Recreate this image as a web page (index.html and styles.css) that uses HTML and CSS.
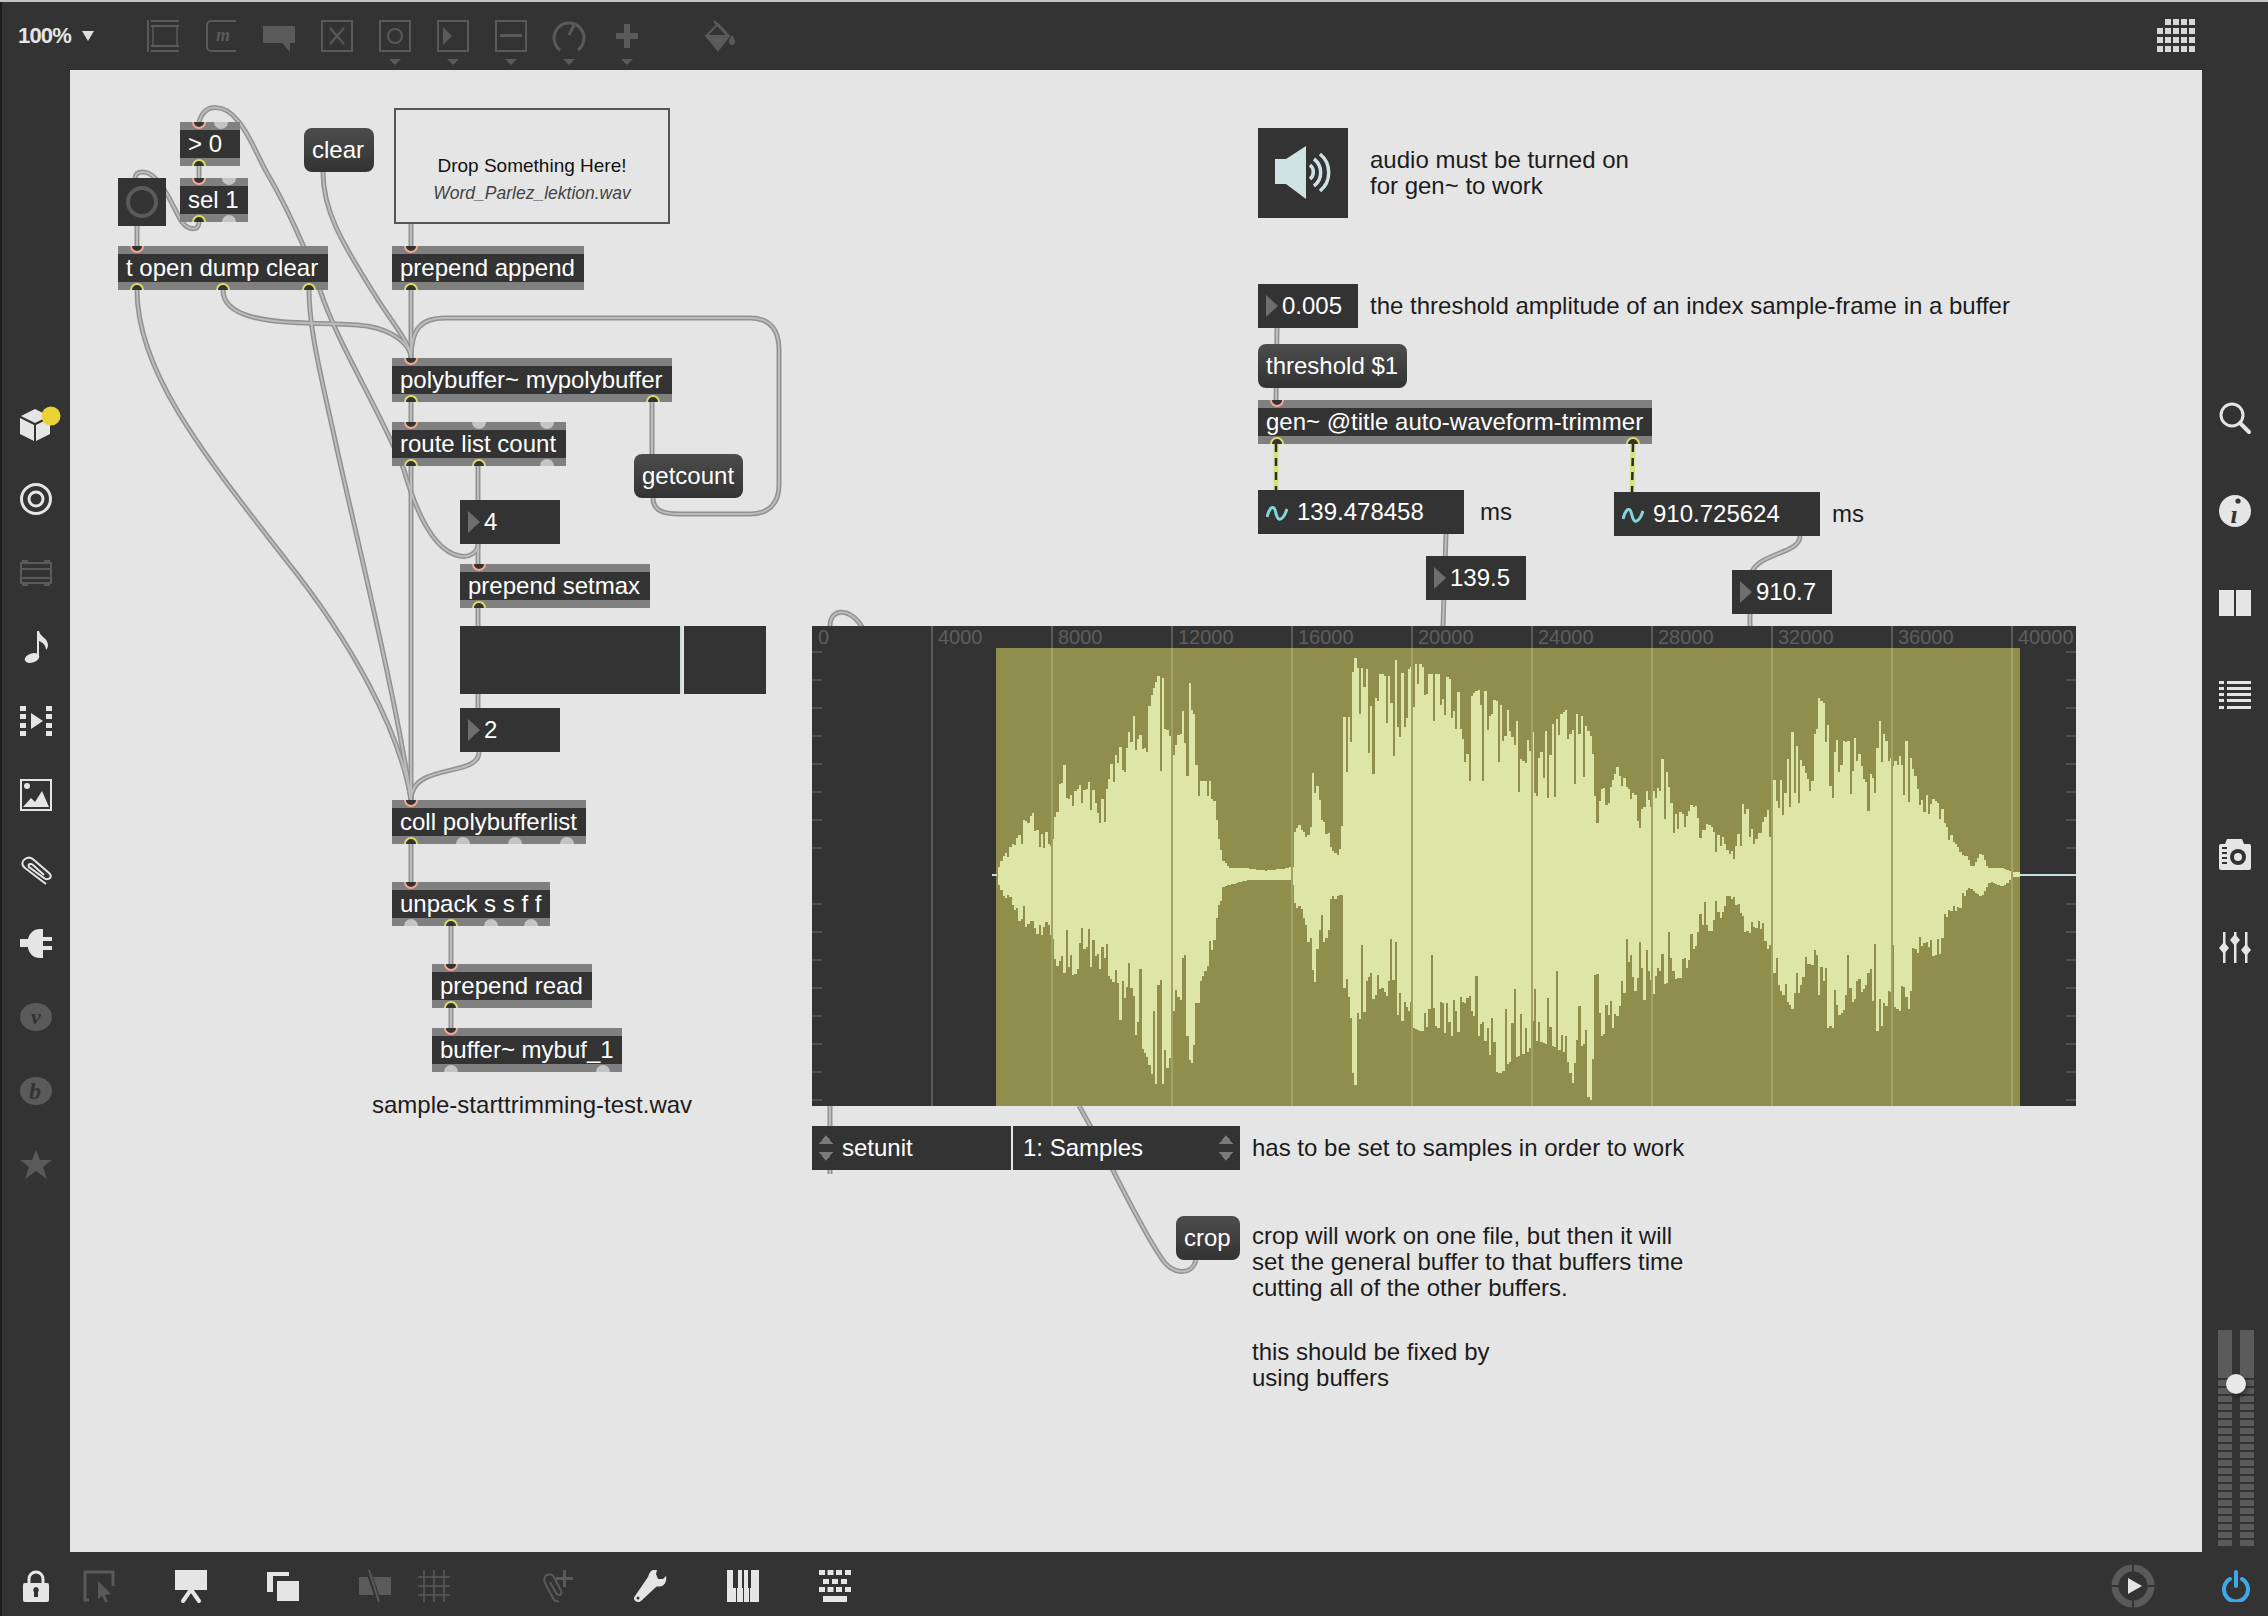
FILE: index.html
```html
<!DOCTYPE html>
<html lang="en">
<head>
  <meta charset="UTF-8">
  <title>Max patcher - auto waveform trimmer</title>
  <link rel="stylesheet" href="styles.css">
</head>
<body>

<div class="window">

  <!-- top toolbar -->
  <header class="topbar">
    <div class="zoom-level">100%<span class="zoom-arrow"></span></div>
    <div class="tools">
      <div class="tool"><svg class="ico dim" viewBox="0 0 32 32"><path class="s2" d="M1 0v32"/><path class="s2" d="M4 1h28M4 6h28M4 26h28M4 31h28"/><path class="s1" d="M6 6v20M30 6v20"/></svg></div>
      <div class="tool"><svg class="ico dim" viewBox="0 0 32 32"><path class="s2" d="M31 1H6a4 4 0 0 0-4 4v22a4 4 0 0 0 4 4h25"/><text class="glyph" x="11" y="21" font-size="18" fill="#5a5a5a">m</text></svg></div>
      <div class="tool"><svg class="ico dim" viewBox="0 0 32 32"><path class="f" d="M0 6h32v17h-5v9l-8-9H0z"/></svg></div>
      <div class="tool"><svg class="ico dim" viewBox="0 0 32 32"><path class="s2" d="M1 1h30v30H1z"/><path class="s2" d="M9 8l14 16M23 8L9 24"/></svg></div>
      <div class="tool menu-tool"><svg class="ico dim" viewBox="0 0 32 32"><path class="s2" d="M1 1h30v30H1z"/><circle class="s2" cx="16" cy="16" r="7"/></svg><span class="tool-arrow"></span></div>
      <div class="tool menu-tool"><svg class="ico dim" viewBox="0 0 32 32"><path class="s2" d="M1 1h30v30H1z"/><path class="f" d="M6 7l9 9-9 9z"/></svg><span class="tool-arrow"></span></div>
      <div class="tool menu-tool"><svg class="ico dim" viewBox="0 0 32 32"><path class="s2" d="M1 1h30v30H1z"/><path class="f" d="M5 14h22v3H5z"/></svg><span class="tool-arrow"></span></div>
      <div class="tool menu-tool"><svg class="ico dim" viewBox="0 0 32 32"><path class="s3" d="M7 30A15 15 0 1 1 25 30"/><path class="s3" d="M16 15l5-10"/></svg><span class="tool-arrow"></span></div>
      <div class="tool menu-tool"><svg class="ico dim" viewBox="0 0 32 32"><path class="f" d="M13 4h6v9h8v6h-8v9h-6v-9H5v-6h8z"/></svg><span class="tool-arrow"></span></div>
      <div class="tool tool-paint"><svg class="ico dim" viewBox="0 0 32 32"><path class="s2" d="M11 1l13 14M4 15L15 4l11 12-11 14z"/><path class="f" d="M1 15h25L14 30z"/><path class="f" d="M29 15c2 3 3 5 3 7a3 3 0 0 1-6 0c0-2 1-4 3-7z"/></svg></div>
    </div>
    <svg class="grid-button" viewBox="0 0 42 38">
      <path d="M10 1h6v6h-6zM18 1h6v6h-6zM26 1h6v6h-6zM34 1h6v6h-6zM2 10h6v6H2zM10 10h6v6h-6zM18 10h6v6h-6zM26 10h6v6h-6zM34 10h6v6h-6zM2 19h6v6H2zM10 19h6v6h-6zM18 19h6v6h-6zM26 19h6v6h-6zM34 19h6v6h-6zM2 28h6v6H2zM10 28h6v6h-6zM18 28h6v6h-6zM26 28h6v6h-6zM34 28h6v6h-6z"/>
    </svg>
  </header>

  <!-- left sidebar -->
  <nav class="leftbar">
    <svg class="ico lit" viewBox="0 0 32 32"><path class="f" d="M15 0l14 7-14 7L1 7z"/><path class="f" d="M0 9l14 7v16L0 25z"/><path class="f" d="M16 16l14-7v16l-14 7z"/><circle cx="31" cy="7" r="9.5" fill="#ead235"/></svg>
    <svg class="ico lit" viewBox="0 0 32 32"><circle class="s3" cx="16" cy="16" r="14.5"/><circle class="s3" cx="16" cy="16" r="7"/></svg>
    <svg class="ico dim" viewBox="0 0 32 32"><path class="s2" d="M1 6h30v20H1z"/><path class="f" d="M1 11h30v2H1zM1 20h30v2H1zM2 26h6v3H2zM24 26h6v3h-6zM2 3h6v3H2zM24 3h6v3h-6z"/></svg>
    <svg class="ico lit" viewBox="0 0 32 32"><ellipse class="f" cx="12" cy="27" rx="7.5" ry="4.5" transform="rotate(-18 12 27)"/><path class="f" d="M17 0h2c1 6 9 7 9 14 0 2-1 4-2 5 0-5-4-8-7-9v17h-2z"/></svg>
    <svg class="ico lit" viewBox="0 0 32 32"><path class="f" d="M0 1h6v5H0zM0 9h6v5H0zM0 18h6v5H0zM0 26h6v5H0zM26 1h6v5h-6zM26 9h6v5h-6zM26 18h6v5h-6zM26 26h6v5h-6zM11 8l12 8-12 8z"/></svg>
    <svg class="ico lit" viewBox="0 0 32 32"><path class="s2" d="M1 1h30v30H1z"/><circle class="f" cx="7" cy="7" r="3"/><path class="f" d="M3 28l8-9 4 4 7-11 7 16z"/></svg>
    <svg class="ico lit" viewBox="0 0 32 32"><path class="s2" d="M26 31L5 15c-4-3-3-7 0-9s6-2 9 1l15 13c2 2 2 4 1 5s-4 2-6 0L9 14c-1-2 0-3 1-3s2 0 3 1l11 10"/></svg>
    <svg class="ico lit" viewBox="0 0 32 32"><path class="f" d="M0 12h8c1-5 5-10 12-10h3v8h9v4h-9v5h9v4h-9v8h-3c-7 0-11-5-12-10v-1H0z"/></svg>
    <svg class="ico dim" viewBox="0 0 32 32"><ellipse class="f" cx="16" cy="16" rx="16" ry="14"/><text class="glyph" x="16" y="23" font-size="22" text-anchor="middle" fill="#333">v</text></svg>
    <svg class="ico dim" viewBox="0 0 32 32"><ellipse class="f" cx="16" cy="16" rx="16" ry="14"/><text class="glyph" x="15" y="24" font-size="24" text-anchor="middle" fill="#333">b</text></svg>
    <svg class="ico dim" viewBox="0 0 32 32"><path class="f" d="M16 1l4 10h12l-9 7 4 12-11-8-11 8 4-12-9-7h12z"/></svg>
  </nav>

  <!-- patcher canvas -->
  <main class="canvas">
    <svg class="cords" viewBox="70 70 2132 1482">
      <g class="cord-edge">
        <g id="cordPaths">
          <path d="M478 544C478 552 470 558 460 556C432 551 414 505 404 470C380 410 338 345 320 290L303 245C290 215 280 195 267 173C257 155 250 135 238 121C225 104 205 102 199 122"/>
          <path d="M199 222C199 232 188 230 182 222C174 210 168 190 155 178C147 170 136 170 135 178"/>
          <path d="M137 226V246"/>
          <path d="M199 166V178"/>
          <path d="M323 172C323 210 340 240 378 300C395 326 411 345 411 358"/>
          <path d="M411 224V246"/>
          <path d="M411 290V358"/>
          <path d="M223 290C223 318 270 322 306 323C350 325 375 322 398 338C406 344 411 350 411 358"/>
          <path d="M309 290C309 330 322 380 335 440C350 510 397 700 411 800"/>
          <path d="M137 290C137 370 200 450 286 560C350 640 400 730 411 800"/>
          <path d="M411 402V422"/>
          <path d="M411 466V800"/>
          <path d="M652 402V454"/>
          <path d="M653 498C653 510 662 514 680 514H750C770 514 779 502 779 485V350C779 330 770 318 750 318H445C420 318 411 330 411 358"/>
          <path d="M478 466V500"/>
          <path d="M478 544V564"/>
          <path d="M478 608V708"/>
          <path d="M479 752C479 778 411 762 411 800"/>
          <path d="M411 844V882"/>
          <path d="M451 926V964"/>
          <path d="M451 1008V1028"/>
          <path d="M1277 328L1276 400"/>
          <path d="M1446 534L1443 626"/>
          <path d="M1800 536C1800 556 1750 552 1750 580V626"/>
          <path d="M830 626C830 608 850 606 864 630"/>
          <path d="M830 626V1174"/>
          <path d="M1196 1260C1192 1276 1172 1276 1160 1256C1130 1210 1100 1140 1079 1106"/>
        </g>
      </g>
      <g class="cord-core"><use href="#cordPaths"/></g>
      <g class="cord-signal">
        <path class="sig-a" d="M1276 444V490M1633 444L1632 492"/>
        <path class="sig-b" d="M1276 444V490M1633 444L1632 492"/>
      </g>
    </svg>

    <div class="obj n-gt">
      <div class="ports"><i class="in"></i><i class="off"></i></div>
      <span class="label">&gt; 0</span>
      <div class="ports"><i class="out"></i></div>
    </div>
    <div class="obj n-sel">
      <div class="ports"><i class="in"></i><i class="off"></i></div>
      <span class="label">sel 1</span>
      <div class="ports"><i class="out"></i><i class="off"></i></div>
    </div>
    <div class="bang n-btn"><span class="bang-ring"></span></div>
    <div class="obj n-trig">
      <div class="ports"><i class="in"></i></div>
      <span class="label">t open dump clear</span>
      <div class="ports"><i class="out"></i><i class="out"></i><i class="out"></i></div>
    </div>
    <div class="msg n-clear">clear</div>
    <div class="dropbox n-drop">
      <span class="drop-title">Drop Something Here!</span>
      <span class="drop-file">Word_Parlez_lektion.wav</span>
    </div>
    <div class="obj n-append">
      <div class="ports"><i class="in"></i></div>
      <span class="label">prepend append</span>
      <div class="ports"><i class="out"></i></div>
    </div>
    <div class="obj n-poly">
      <div class="ports"><i class="in"></i></div>
      <span class="label">polybuffer~ mypolybuffer</span>
      <div class="ports"><i class="out"></i><i class="out"></i></div>
    </div>
    <div class="obj n-route">
      <div class="ports"><i class="in"></i><i class="off"></i><i class="off"></i></div>
      <span class="label">route list count</span>
      <div class="ports"><i class="out"></i><i class="out"></i><i class="off"></i></div>
    </div>
    <div class="msg n-getcount">getcount</div>
    <div class="num n-num4"><span class="num-tri"></span>4</div>
    <div class="obj n-setmax">
      <div class="ports"><i class="in"></i></div>
      <span class="label">prepend setmax</span>
      <div class="ports"><i class="out"></i></div>
    </div>
    <div class="slider n-slider"><span class="slider-handle"></span></div>
    <div class="num n-num2"><span class="num-tri"></span>2</div>
    <div class="obj n-coll">
      <div class="ports"><i class="in"></i></div>
      <span class="label">coll polybufferlist</span>
      <div class="ports"><i class="out"></i><i class="off"></i><i class="off"></i><i class="off"></i></div>
    </div>
    <div class="obj n-unpack">
      <div class="ports"><i class="in"></i></div>
      <span class="label">unpack s s f f</span>
      <div class="ports"><i class="off"></i><i class="out"></i><i class="off"></i><i class="off"></i></div>
    </div>
    <div class="obj n-read">
      <div class="ports"><i class="in"></i></div>
      <span class="label">prepend read</span>
      <div class="ports"><i class="out"></i></div>
    </div>
    <div class="obj n-buffer">
      <div class="ports"><i class="in"></i></div>
      <span class="label">buffer~ mybuf_1</span>
      <div class="ports"><i class="off"></i><i class="off"></i></div>
    </div>
    <div class="comment n-sample">sample-starttrimming-test.wav</div>

    <div class="speaker n-speaker">
      <svg viewBox="0 0 90 90">
        <path class="spk-fill" d="M17 31h11l20-13v53L28 56H17z"/>
        <path class="spk-line" d="M52 37a9 9 0 0 1 0 14M56 31a17 17 0 0 1 0 27M62 26a24 24 0 0 1 0 37"/>
      </svg>
    </div>
    <div class="comment n-audio">audio must be turned on<br>for gen~ to work</div>

    <div class="num n-thresh-num"><span class="num-tri"></span>0.005</div>
    <div class="comment n-thresh-text">the threshold amplitude of an index sample-frame in a buffer</div>
    <div class="msg n-thresh">threshold $1</div>
    <div class="obj n-gen">
      <div class="ports"><i class="in"></i></div>
      <span class="label">gen~ @title auto-waveform-trimmer</span>
      <div class="ports"><i class="out"></i><i class="out"></i></div>
    </div>
    <div class="num num-sig n-sig1">
      <svg class="sig-wave" viewBox="0 0 22 16"><path d="M1 12C3 4 6 1 8 3S10 13 13 14 19 10 21 4"/></svg>139.478458
    </div>
    <div class="comment n-ms1">ms</div>
    <div class="num num-sig n-sig2">
      <svg class="sig-wave" viewBox="0 0 22 16"><path d="M1 12C3 4 6 1 8 3S10 13 13 14 19 10 21 4"/></svg>910.725624
    </div>
    <div class="comment n-ms2">ms</div>
    <div class="num n-start"><span class="num-tri"></span>139.5</div>
    <div class="num n-end"><span class="num-tri"></span>910.7</div>

    <div class="waveform n-wave">
      <svg class="wave-plot" viewBox="0 0 1264 480">
        <rect class="wave-sel" x="184" y="22" width="1024" height="458"/>
        <path class="wave-ticks" d="M0 26h10M0 54h10M0 82h10M0 110h10M0 138h10M0 166h10M0 194h10M0 222h10M0 278h10M0 306h10M0 334h10M0 362h10M0 390h10M0 418h10M0 446h10M0 474h10M1254 26h10M1254 54h10M1254 82h10M1254 110h10M1254 138h10M1254 166h10M1254 194h10M1254 222h10M1254 278h10M1254 306h10M1254 334h10M1254 362h10M1254 390h10M1254 418h10M1254 446h10M1254 474h10"/>
        <path class="wave-center" d="M180 249h5M1208 249h56"/>
        <path class="wave-data" id="waveData"/>
        <path class="wave-grid" d="M120 0v480M240 0v22M360 0v22M480 0v22M600 0v22M720 0v22M840 0v22M960 0v22M1080 0v22M1200 0v22"/>
        <path class="wave-grid-sel" d="M240 22v458M360 22v458M480 22v458M600 22v458M720 22v458M840 22v458M960 22v458M1080 22v458M1200 22v458"/>
      </svg>
      <div class="ruler">
        <span>0</span><span>4000</span><span>8000</span><span>12000</span><span>16000</span><span>20000</span><span>24000</span><span>28000</span><span>32000</span><span>36000</span><span class="ruler-last">40000</span>
      </div>
    </div>

    <div class="umenu n-menu1"><span class="updown"></span>setunit</div>
    <div class="umenu umenu-right n-menu2">1: Samples<span class="updown"></span></div>
    <div class="comment n-has">has to be set to samples in order to work</div>
    <div class="msg n-crop">crop</div>
    <div class="comment n-croptext">crop will work on one file, but then it will<br>set the general buffer to that buffers time<br>cutting all of the other buffers.</div>
    <div class="comment n-fix">this should be fixed by<br>using buffers</div>
  </main>

  <!-- right sidebar -->
  <aside class="rightbar">
    <svg class="ico lit" viewBox="0 0 32 32"><circle class="s3" cx="13" cy="13" r="11"/><path class="s-round" d="M21 21l9 9"/></svg>
    <svg class="ico lit" viewBox="0 0 32 32"><circle class="f" cx="16" cy="16" r="16"/><circle cx="19" cy="6" r="2.6" fill="#333"/><text class="glyph" x="15" y="28" font-size="26" text-anchor="middle" fill="#333">ı</text></svg>
    <svg class="ico lit" viewBox="0 0 32 32"><path class="f" d="M0 3h15v26H0zM17 3h15v26H17z"/></svg>
    <svg class="ico lit" viewBox="0 0 32 32"><path class="f" d="M0 1h5v3H0zM8 1h24v3H8zM0 7h5v3H0zM8 7h24v3H8zM0 13h5v3H0zM8 13h24v3H8zM0 19h5v3H0zM8 19h24v3H8zM0 26h5v3H0zM8 26h24v3H8z"/></svg>
    <svg class="ico lit ico-gap" viewBox="0 0 32 32"><path class="f" d="M8 0h15l2 5h5a2 2 0 0 1 2 2v22a2 2 0 0 1-2 2H2a2 2 0 0 1-2-2V7a2 2 0 0 1 2-2h4z"/><circle cx="19" cy="18" r="8" fill="#333"/><circle class="f" cx="19" cy="18" r="4"/><path d="M3 8h5v2H3zM3 13h5v2H3zM3 18h5v2H3zM3 23h5v2H3z" fill="#333"/></svg>
    <svg class="ico lit" viewBox="0 0 32 32"><path class="f" d="M4 0h2.500v12h-2.500zM4 20h2.500v11h-2.500zM15 0h2.500v4h-2.500zM15 12h2.500v19h-2.500zM26 0h2.500v14h-2.500zM26 22h2.500v9h-2.500z"/><path class="f" d="M5 10l5 6-5 6-5-6zM16 2l5 6-5 6-5-6zM27 12l5 6-5 6-5-6z"/></svg>
    <div class="meter">
      <span class="meter-bar"></span>
      <span class="meter-bar"></span>
      <span class="meter-knob"></span>
    </div>
  </aside>

  <!-- bottom toolbar -->
  <footer class="bottombar">
    <svg class="ico lit b-lock" viewBox="0 0 26 32"><path class="s3" d="M6 15V9a7 7 0 0 1 14 0v6"/><rect class="f" x="0" y="13" width="26" height="19" rx="2"/><path d="M13 17a3 3 0 0 1 2 5v5h-4v-5a3 3 0 0 1 2-5z" fill="#333"/></svg>
    <svg class="ico dim b-edit" viewBox="0 0 32 32"><path class="s3" d="M6 30H2V2h28v14"/><path class="f" d="M15 11l13 13-6 1 3 7-3 0-3-6-4 3z"/></svg>
    <svg class="ico lit b-board" viewBox="0 0 32 32"><path class="f" d="M0 0h32v20H0z"/><path class="s-round" d="M15 21L8 31M17 21l7 10"/></svg>
    <svg class="ico lit b-windows" viewBox="0 0 32 32"><path class="f" d="M0 2h22v4H6v16H0z"/><path class="f" d="M10 11h22v20H10z"/></svg>
    <svg class="ico dim b-snap" viewBox="0 0 32 32"><path class="f" d="M0 7h32v18H0z"/><path class="cut" d="M9 0l11 32"/><path class="s2" d="M10 0l10 32"/></svg>
    <svg class="ico dim b-grid" viewBox="0 0 32 32"><path class="s1" d="M6 0v32M16 0v32M26 0v32M0 7h32M0 16h32M0 25h32"/></svg>
    <svg class="ico dim b-clip" viewBox="0 0 32 32"><path class="s2" d="M17 31c-3 1-5-1-6-3L3 13c-2-4 0-7 2-8s5-1 7 2l7 14c1 2 0 4-1 4s-3 0-4-2L8 12"/><path class="f" d="M21 0h3v7h7v3h-7v7h-3v-7h-7V7h7z"/></svg>
    <svg class="ico lit b-wrench" viewBox="0 0 32 32"><path class="f" d="M23 0l-1 4 2 5 5 0 3-3c1 4-1 9-4 10-3 1-5 0-6 1L7 31c-2 2-6 1-7-2 0-1 0-2 1-3l13-19c1-3 2-6 5-7z"/><circle cx="4" cy="28" r="1.500" fill="#333"/></svg>
    <svg class="ico lit b-piano" viewBox="0 0 32 32"><path class="f" d="M0 0h6v18h3v14H0zM11 0h4v18h1v14h-6V18h1zM17 0h4v18h1v14h-5zM24 0h8v32h-9V18h1z"/></svg>
    <svg class="ico lit b-keys" viewBox="0 0 32 32"><path class="f" d="M0 0h6v5H0zM8.500 0h6v5h-6zM17 0h6v5h-6zM26 0h6v5h-6zM4 9h6v5H4zM13 9h6v5h-6zM22 9h6v5h-6zM0 17h6v5H0zM8.500 17h6v5h-6zM17 17h6v5h-6zM26 17h6v5h-6zM4 26h24v6H4z"/></svg>
    <svg class="b-dial" viewBox="0 0 44 44"><circle class="dial-ring" cx="22" cy="22" r="18"/><path class="dial-cut" d="M22 0v44M0 22h44"/><path class="dial-play" d="M17 14l14 8-14 8z"/></svg>
    <svg class="b-power" viewBox="0 0 28 32"><path class="pow" d="M8 9a12 12 0 1 0 12 0"/><path class="pow" d="M14 2v14"/></svg>
  </footer>
</div>

<script src="wave.js"></script>
</body>
</html>
```

FILE: styles.css
```css
* {
  box-sizing: border-box;
}

html,
body {
  margin: 0;
  height: 100%;
}

body {
  background: #333;
  font-family: 'Liberation Sans', Arial, sans-serif;
  overflow: hidden;
}

.window {
  width: 2268px;
  height: 1616px;
  display: grid;
  grid-template-columns: 70px 2132px 66px;
  grid-template-rows: 68px 1482px 64px;
  background: #333;
  border-top: 2px solid #c4c4c4;
  box-shadow: inset 2px 0 0 #1d1d1d;
}

/* shared icon styles */
.ico {
  width: 32px;
  height: 32px;
  overflow: visible;
  display: block;
  flex: none;
}

.lit { color: #e5e5e5; }
.dim { color: #5a5a5a; }

.f { fill: currentColor; }
.s1, .s2, .s3, .s-round { fill: none; stroke: currentColor; }
.s1 { stroke-width: 1.5; }
.s2 { stroke-width: 2; }
.s3 { stroke-width: 3; }
.s-round { stroke-width: 4; stroke-linecap: round; }
.cut { fill: none; stroke: #333; stroke-width: 5; }

.glyph {
  font-family: 'Liberation Serif', serif;
  font-style: italic;
  font-weight: 700;
}

/* top toolbar */
.topbar {
  grid-column: 1 / 4;
  display: flex;
  align-items: flex-start;
  position: relative;
}

.zoom-level {
  margin: 22px 0 0 18px;
  width: 129px;
  color: #e5e5e5;
  font-size: 22px;
  font-weight: 700;
  line-height: 24px;
  letter-spacing: -0.8px;
  display: flex;
  align-items: center;
}

.zoom-arrow {
  margin-left: 11px;
  border-left: 6px solid transparent;
  border-right: 6px solid transparent;
  border-top: 10px solid #ddd;
}

.tools {
  display: flex;
  gap: 26px;
  padding-top: 18px;
}

.tool {
  width: 32px;
  display: flex;
  flex-direction: column;
  align-items: center;
}

.tool-arrow {
  margin-top: 7px;
  border-left: 6px solid transparent;
  border-right: 6px solid transparent;
  border-top: 6px solid #5a5a5a;
}

.tool-paint {
  margin-left: 34px;
}

.grid-button {
  width: 42px;
  height: 38px;
  margin: 16px 71px 0 auto;
  fill: #d8d8d8;
}

/* left sidebar */
.leftbar {
  display: flex;
  flex-direction: column;
  align-items: center;
  gap: 42px;
  padding: 339px 0 0 2px;
}

/* right sidebar */
.rightbar {
  display: flex;
  flex-direction: column;
  align-items: center;
  gap: 60.500px;
  padding-top: 332px;
  position: relative;
}

.ico-gap {
  margin-top: 67px;
}

.meter {
  position: absolute;
  left: 16px;
  bottom: 6px;
  display: flex;
  gap: 8px;
}

.meter-bar {
  width: 14px;
  height: 216px;
  background:
    linear-gradient(#5a5a5a, #5a5a5a) top / 100% 48px no-repeat,
    repeating-linear-gradient(#333 0, #333 2px, #5a5a5a 2px, #5a5a5a 8px) 0 48px;
}

.meter-knob {
  position: absolute;
  left: 8px;
  top: 44px;
  width: 20px;
  height: 20px;
  border-radius: 50%;
  background: #e8e8e8;
  box-shadow: 3px 3px 4px rgba(0, 0, 0, 0.35);
}

/* bottom toolbar */
.bottombar {
  grid-column: 1 / 4;
  display: flex;
  align-items: center;
  padding: 4px 18px 0 23px;
  position: relative;
  height: 64px;
}

.b-lock { width: 26px; }
.b-edit { margin-left: 34px; }
.b-board { margin-left: 60px; }
.b-windows { margin-left: 60px; }
.b-snap { margin-left: 60px; }
.b-grid { margin-left: 27px; }
.b-clip { margin-left: 92px; }
.b-wrench { margin-left: 60px; }
.b-piano { margin-left: 61px; }
.b-keys { margin-left: 60px; }

.b-dial {
  width: 44px;
  height: 44px;
  margin-left: auto;
}

.dial-ring {
  fill: none;
  stroke: #5a5a5a;
  stroke-width: 7;
}

.dial-cut {
  stroke: #333;
  stroke-width: 2;
}

.dial-play {
  fill: #e5e5e5;
}

.b-power {
  width: 28px;
  height: 32px;
  margin-left: 67px;
}

.pow {
  fill: none;
  stroke: #3fa9e8;
  stroke-width: 4;
  stroke-linecap: round;
}

/* patcher canvas */
.canvas {
  position: relative;
  background: #e5e5e5;
  overflow: hidden;
}

.cords {
  position: absolute;
  left: 0;
  top: 0;
  width: 2132px;
  height: 1482px;
}

.cord-edge,
.cord-core {
  fill: none;
}

.cord-edge {
  stroke: #929292;
  stroke-width: 5;
}

.cord-core {
  stroke: #bcbcbc;
  stroke-width: 2;
}

.cord-signal .sig-a {
  fill: none;
  stroke: #d6e27e;
  stroke-width: 5;
}

.cord-signal .sig-b {
  fill: none;
  stroke: #2c2c2c;
  stroke-width: 2.500;
  stroke-dasharray: 8 6;
}

/* patcher objects */
.obj,
.msg,
.num,
.umenu,
.bang,
.slider,
.speaker,
.dropbox,
.comment,
.waveform {
  position: absolute;
}

.obj {
  height: 44px;
  display: flex;
  flex-direction: column;
  background: #333;
  color: #fff;
  font-size: 24px;
}

.ports {
  height: 8px;
  flex: none;
  background: #808080;
  display: flex;
  justify-content: space-between;
  padding: 0 12px;
  overflow: hidden;
}

.ports i {
  width: 14px;
  height: 14px;
  margin-top: -7px;
  border-radius: 50%;
  flex: none;
}

.ports:last-child i {
  margin-top: 1px;
}

.in { background: #333; border: 2px solid #f4a596; }
.out { background: #333; border: 2px solid #dcdc62; }
.off { background: #c4c4c4; }

.label {
  flex: 1;
  padding-left: 8px;
  line-height: 27px;
  white-space: nowrap;
}

.msg {
  height: 44px;
  padding-left: 8px;
  border-radius: 8px;
  background: linear-gradient(#4c4c4c, #333);
  color: #fff;
  font-size: 24px;
  line-height: 43px;
  white-space: nowrap;
}

.num {
  height: 44px;
  padding-left: 24px;
  display: flex;
  align-items: center;
  background: #333;
  color: #fff;
  font-size: 24px;
}

.num-tri {
  position: absolute;
  left: 8px;
  top: 11px;
  border-top: 11px solid transparent;
  border-bottom: 11px solid transparent;
  border-left: 12px solid #6e6e6e;
}

.num-sig {
  padding-left: 39px;
}

.sig-wave {
  position: absolute;
  left: 8px;
  top: 15px;
  width: 22px;
  height: 16px;
  fill: none;
  stroke: #82d7dd;
  stroke-width: 3;
}

.bang {
  background: #333;
  display: flex;
  align-items: center;
  justify-content: center;
}

.bang-ring {
  width: 32px;
  height: 32px;
  border: 4px solid #5a5a5a;
  border-radius: 50%;
}

.dropbox {
  display: flex;
  flex-direction: column;
  align-items: center;
  justify-content: center;
  gap: 5px;
  padding-top: 26px;
  border: 2px solid #555;
  line-height: 22px;
}

.drop-title {
  color: #111;
  font-size: 19px;
}

.drop-file {
  color: #444;
  font-size: 17.500px;
  font-style: italic;
}

.comment {
  color: #1c1c1c;
  font-size: 24px;
  line-height: 26px;
  white-space: nowrap;
}

.slider {
  background: #333;
}

.slider-handle {
  position: absolute;
  left: 220px;
  top: 0;
  width: 4px;
  height: 100%;
  background: #c9dedf;
  border-right: 2px solid #e5e5e5;
}

.speaker {
  background: #333;
}

.speaker svg {
  display: block;
  width: 100%;
  height: 100%;
}

.spk-fill {
  fill: #cfe3e5;
}

.spk-line {
  fill: none;
  stroke: #cfe3e5;
  stroke-width: 3.500;
}

.umenu {
  height: 44px;
  display: flex;
  align-items: center;
  padding: 0 8px 0 30px;
  background: #333;
  color: #fff;
  font-size: 24px;
}

.umenu-right {
  padding: 0 0 0 10px;
}

.updown {
  position: absolute;
  left: 7px;
  top: 9px;
  height: 26px;
  width: 14px;
  background:
    linear-gradient(to bottom right, transparent 49%, #7a7a7a 50%) 0 0 / 7px 9px no-repeat,
    linear-gradient(to bottom left, transparent 49%, #7a7a7a 50%) 7px 0 / 7px 9px no-repeat,
    linear-gradient(to top right, transparent 49%, #7a7a7a 50%) 0 17px / 7px 9px no-repeat,
    linear-gradient(to top left, transparent 49%, #7a7a7a 50%) 7px 17px / 7px 9px no-repeat;
}

.umenu-right .updown {
  left: auto;
  right: 7px;
}

/* waveform */
.waveform {
  background: #333;
}

.wave-plot {
  position: absolute;
  inset: 0;
  width: 100%;
  height: 100%;
}

.wave-sel { fill: #8f8e4d; }
.wave-data { fill: #dde6a6; shape-rendering: crispEdges; }
.wave-ticks { fill: none; stroke: #5a5a5a; stroke-width: 1.500; }
.wave-center { fill: none; stroke: #c5dfe0; stroke-width: 2; }
.wave-grid { fill: none; stroke: #5a5a5a; stroke-width: 2; }
.wave-grid-sel { fill: none; stroke: #a3a368; stroke-width: 2; }

.ruler {
  position: relative;
  display: flex;
  height: 22px;
  color: #5e5e5e;
  font-size: 20px;
  line-height: 22px;
}

.ruler span {
  width: 120px;
  flex: none;
  padding-left: 6px;
}

.ruler .ruler-last {
  width: 64px;
}

/* node positions on the canvas */
.n-gt { left: 110px; top: 52px; width: 60px; }
.n-sel { left: 110px; top: 108px; width: 68px; }
.n-btn { left: 48px; top: 108px; width: 48px; height: 48px; }
.n-trig { left: 48px; top: 176px; width: 210px; }
.n-clear { left: 234px; top: 58px; width: 70px; }
.n-drop { left: 324px; top: 38px; width: 276px; height: 116px; }
.n-append { left: 322px; top: 176px; width: 192px; }
.n-poly { left: 322px; top: 288px; width: 280px; }
.n-route { left: 322px; top: 352px; width: 174px; }
.n-getcount { left: 564px; top: 384px; width: 109px; }
.n-num4 { left: 390px; top: 430px; width: 100px; }
.n-setmax { left: 390px; top: 494px; width: 190px; }
.n-slider { left: 390px; top: 556px; width: 306px; height: 68px; }
.n-num2 { left: 390px; top: 638px; width: 100px; }
.n-coll { left: 322px; top: 730px; width: 194px; }
.n-unpack { left: 322px; top: 812px; width: 158px; }
.n-read { left: 362px; top: 894px; width: 160px; }
.n-buffer { left: 362px; top: 958px; width: 190px; }
.n-sample { left: 302px; top: 1022px; }
.n-speaker { left: 1188px; top: 58px; width: 90px; height: 90px; }
.n-audio { left: 1300px; top: 77px; }
.n-thresh-num { left: 1188px; top: 214px; width: 100px; }
.n-thresh-text { left: 1300px; top: 223px; }
.n-thresh { left: 1188px; top: 274px; width: 149px; }
.n-gen { left: 1188px; top: 330px; width: 394px; }
.n-sig1 { left: 1188px; top: 420px; width: 206px; }
.n-ms1 { left: 1410px; top: 429px; }
.n-sig2 { left: 1544px; top: 422px; width: 206px; }
.n-ms2 { left: 1762px; top: 431px; }
.n-start { left: 1356px; top: 486px; width: 100px; }
.n-end { left: 1662px; top: 500px; width: 100px; }
.n-wave { left: 742px; top: 556px; width: 1264px; height: 480px; }
.n-menu1 { left: 742px; top: 1056px; width: 199px; }
.n-menu2 { left: 943px; top: 1056px; width: 227px; }
.n-has { left: 1182px; top: 1065px; }
.n-crop { left: 1106px; top: 1146px; width: 64px; }
.n-croptext { left: 1182px; top: 1153px; }
.n-fix { left: 1182px; top: 1269px; }
```

FILE: wave.js
```js
// envelope of the sound file, traced as [x, y] pairs
const upperA = [[439,794],[444,770],[455,735],[475,700],[490,675],[500,625],[510,640],[518,600],[525,640],[540,640],[555,680],[562,700],[575,565],[590,420],[600,505],[615,545],[635,505],[650,520],[660,560],[680,570],[690,505],[695,460],[715,410],[725,460],[740,320],[755,315],[775,320],[787,245],[805,180],[812,210],[825,310],[835,440],[845,305],[855,305],[873,205],[885,375],[890,515],[915,510],[925,565],[935,680],[945,750],[960,775],[1000,775],[1040,782],[1085,775],[1105,770],[1107,620],[1125,635],[1130,690],[1140,520],[1150,470],[1160,560],[1170,630],[1185,680],[1195,725],[1205,740],[1213,630],[1215,320],[1228,320],[1237,115],[1247,175],[1265,175],[1285,200],[1300,190],[1315,205],[1335,140]];
const upperB = [[0,190],[20,175],[40,155],[60,190],[100,195],[120,225],[135,260],[150,270],[170,240],[185,235],[200,260],[225,285],[245,305],[260,335],[280,400],[300,350],[320,370],[340,340],[360,310],[395,270],[405,320],[425,380],[440,540],[470,530],[490,450],[505,530],[525,555],[545,550],[565,520],[585,445],[600,505],[620,600],[640,620],[655,570],[675,630],[695,650],[715,660],[735,735],[750,700],[770,550],[780,630],[800,620],[825,595],[835,510],[860,510],[875,360],[895,445],[915,520],[935,260],[955,295],[970,390],[1000,395],[1020,380],[1040,530],[1070,325],[1090,405],[1120,405],[1145,380],[1160,540],[1190,565],[1210,585],[1225,665],[1240,685],[1255,735],[1270,740],[1280,775],[1300,725],[1315,775],[1350,775],[1370,785],[1388,788]];
const lowerA = [[439,794],[444,825],[455,860],[475,885],[490,935],[520,970],[545,975],[560,975],[570,1050],[582,1100],[600,1070],[612,1100],[630,1045],[650,1070],[680,1080],[700,1115],[715,1230],[735,1100],[745,1255],[755,1295],[775,1340],[785,1390],[805,1450],[815,1400],[825,1350],[835,1200],[845,1270],[860,1200],[873,1385],[885,1260],[895,1115],[915,1055],[925,995],[935,930],[945,830],[960,825],[1000,810],[1100,810],[1107,885],[1130,930],[1140,1030],[1152,1120],[1165,1010],[1180,975],[1190,875],[1205,855],[1212,855],[1217,1185],[1225,1120],[1238,1415],[1241,1450],[1248,1235],[1270,1190],[1300,1130],[1335,1210]];
const lowerB = [[0,1230],[20,1250],[45,1265],[70,1240],[110,1280],[150,1250],[190,1295],[210,1385],[225,1390],[240,1360],[260,1340],[285,1325],[300,1290],[335,1305],[370,1330],[385,1420],[410,1445],[425,1470],[440,1350],[450,1275],[480,1250],[495,1155],[515,1130],[550,1175],[575,1135],[605,1110],[635,1100],[650,1030],[680,965],[705,960],[735,855],[760,900],[770,995],[790,950],[810,960],[830,1065],[850,1140],[880,1205],[910,1060],[930,1070],[945,1265],[955,1340],[970,1230],[1000,1190],[1030,1150],[1050,1110],[1070,1290],[1090,1170],[1120,1205],[1145,1195],[1160,1040],[1190,1040],[1210,1030],[1225,900],[1250,905],[1270,830],[1300,860],[1320,815],[1350,830],[1370,800],[1388,800]];

function toPlot(offset, pts) {
  return pts.map(p => [offset + p[0] / 2.24, p[1] / 3 - 16]);
}

const upper = toPlot(-12, upperA).concat(toPlot(588, upperB));
const lower = toPlot(-12, lowerA).concat(toPlot(588, lowerB));

function envelope(pts, x) {
  for (let i = 1; i < pts.length; i++) {
    if (pts[i][0] >= x) {
      const a = pts[i - 1], b = pts[i];
      const t = (x - a[0]) / ((b[0] - a[0]) || 1);
      return a[1] + (b[1] - a[1]) * Math.max(0, Math.min(1, t));
    }
  }
  return pts[pts.length - 1][1];
}

let seed = 7;
function rand() {
  seed = (seed * 16807) % 2147483647;
  return seed / 2147483647;
}

function notch(amp) {
  if (amp < 25) return amp;
  const r = rand();
  if (r < 0.13) return amp * (0.48 + rand() * 0.25);
  if (r < 0.6) return amp * (0.76 + rand() * 0.16);
  return amp;
}

const center = 248.7;
let d = "";
for (let x = 184; x < 1207; x += 2.24) {
  const up = notch(center - envelope(upper, x));
  const down = notch(envelope(lower, x) - center);
  const top = (center - up).toFixed(1);
  const h = (up + down).toFixed(1);
  d += "M" + x.toFixed(2) + " " + top + "h2.3v" + h + "h-2.3z";
}
document.getElementById("waveData").setAttribute("d", d);
```
